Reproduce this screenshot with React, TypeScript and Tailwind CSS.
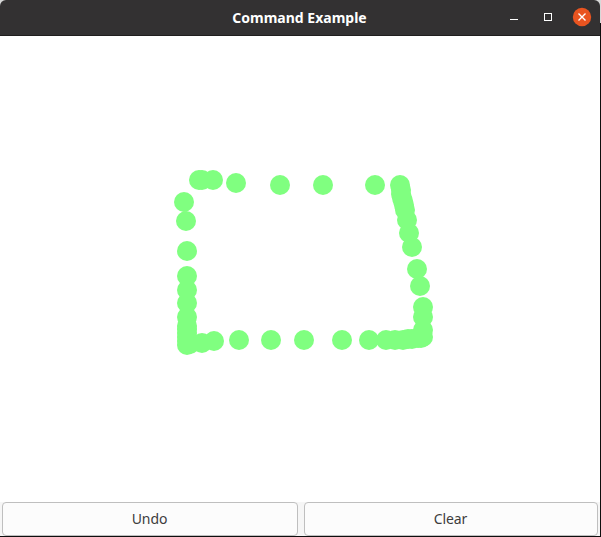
const dots: [number, number][] = [
  [199, 180], [202, 180], [213, 180], [236, 183], [280, 185], [323, 185], [375, 185],
  [400, 185], [401, 190], [401, 194], [402, 198], [403, 201], [404, 205], [405, 210], [407, 220], [409, 233], [412, 247],
  [417, 269], [420, 286], [423, 307], [423, 317], [423, 330], [423, 337], [421, 338], [418, 338], [412, 339], [408, 339], [403, 340],
  [395, 340], [386, 340], [369, 340], [342, 340], [304, 340], [271, 340], [239, 340],
  [214, 341], [202, 343], [190, 344], [187, 345], [187, 341], [187, 337], [187, 333], [187, 329], [187, 326],
  [187, 317], [187, 303], [187, 290], [187, 276], [187, 251], [186, 221], [184, 202],
];

function TitleBar() {
  return (
    <header className="grid h-9 w-[600px] shrink-0 grid-cols-[1fr_auto_1fr] items-center rounded-t-[6px] border-b border-[#201e1e] bg-[#333132]">
      <span />
      <h1 className="pr-px text-[14px] leading-5 font-bold text-white">Command Example</h1>
      <svg className="h-[35px] w-[111px] justify-self-end" viewBox="489 0 111 35" fill="none">
        <path d="M510 19.5h8" stroke="#fff" />
        <rect x="544.5" y="13.5" width="7" height="7" stroke="#fff" />
        <circle cx="582" cy="17" r="9.2" fill="#e95420" />
        <path d="M578.5 13.5l7 7m0-7l-7 7" stroke="#fff" strokeWidth="1.4" />
      </svg>
    </header>
  );
}

function Button({ label }: { label: string }) {
  return (
    <button className="flex h-[34px] items-center justify-center rounded-[4px] border border-[#bfbfbf] bg-[#fcfcfc] pr-px text-[14px] leading-5 tracking-[-0.1px] text-[#3d3d3d]">
      {label}
    </button>
  );
}

export default function App() {
  return (
    <div className="h-[537px] w-[601px] bg-[#0e0e0e] font-['Noto_Sans','Open_Sans',sans-serif]">
      <div className="flex h-full flex-col bg-linear-to-b from-[#d8d8d8] from-[23px] to-[#0e0e0e] to-[23px]">
        <TitleBar />
        <main className="mr-px h-[466px] shrink-0 bg-white">
          <svg className="block h-[466px] w-[600px]" viewBox="0 36 600 466" fill="#80ff80">
            {dots.map(([x, y], i) => (
              <circle key={i} cx={x} cy={y} r="10" />
            ))}
          </svg>
        </main>
        <footer className="mr-px grid h-[34px] shrink-0 grid-cols-[296px_294px] gap-1.5 bg-[#f6f6f6] pl-0.5">
          <Button label="Undo" />
          <Button label="Clear" />
        </footer>
      </div>
    </div>
  );
}
